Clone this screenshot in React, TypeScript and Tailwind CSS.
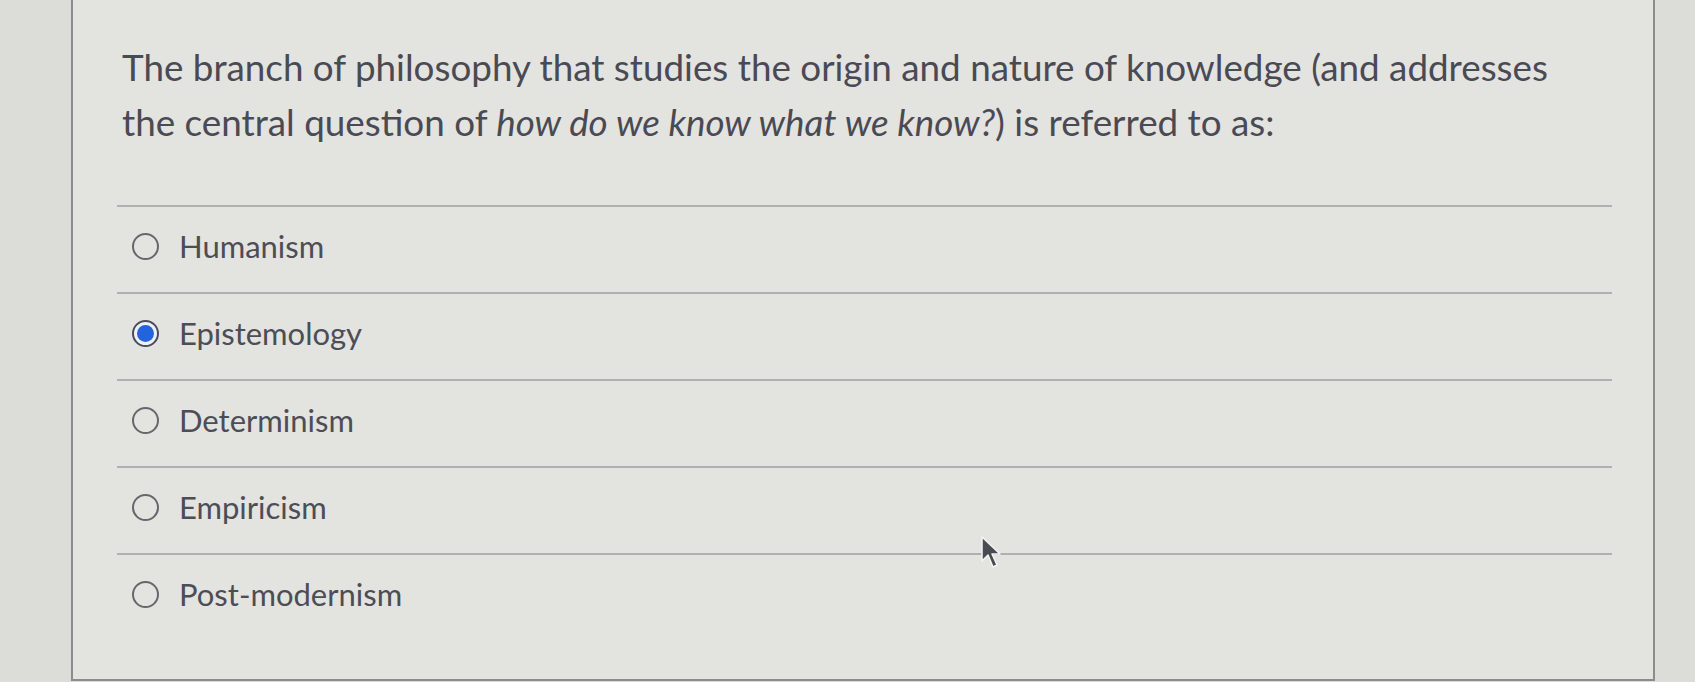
import React from "react";

const options = ["Humanism", "Epistemology", "Determinism", "Empiricism", "Post-modernism"];
const selected = "Epistemology";

const Radio: React.FC<{ checked: boolean }> = ({ checked }) =>
  checked ? (
    <span className="flex h-[27px] w-[27px] shrink-0 items-center justify-center rounded-full border-2 border-[#4a4c5c] bg-[#eef0fa]">
      <span className="h-[17px] w-[17px] rounded-full bg-[#2363dd]" />
    </span>
  ) : (
    <span className="h-[27px] w-[27px] shrink-0 rounded-full border-2 border-[#66666c]" />
  );

export default function App() {
  return (
    <div className="relative h-[682px] w-full overflow-hidden bg-[#dcdcd9] font-['Lato','Liberation_Sans',sans-serif]">
      <div className="ml-[71px] h-[681px] w-[1584px] border-x-2 border-b-2 border-[#8c8c8e] bg-[#e3e3e0] pl-[44px] pr-[41px] pt-[40px]">
        <p className="pl-[5px] text-[36.8px] leading-[55px] text-[#4a4a54]">
          The branch of philosophy that studies the origin and nature of knowledge (and addresses
          <br />
          the central question of <em>how do we know what we know?</em>) is referred to as:
        </p>

        <div className="mt-[55px]">
          {options.map((o) => (
            <div key={o} className="flex h-[87px] items-center gap-[20px] border-t-2 border-[#b0b0b0] pb-[6px] pl-[15px]">
              <Radio checked={o === selected} />
              <span className="text-[31px] text-[#4d4d56]">{o}</span>
            </div>
          ))}
        </div>
      </div>

      {/* mouse pointer */}
      <svg className="absolute left-[980px] top-[535px]" width="24" height="36" viewBox="0 0 24 36">
        <path d="M2 2 L2 26 L8 20 L13 32 L17 30 L12 19 L20 19 Z" fill="#4a4b50" stroke="#f4f4f4" strokeWidth="1.5" strokeLinejoin="round" />
      </svg>
    </div>
  );
}
